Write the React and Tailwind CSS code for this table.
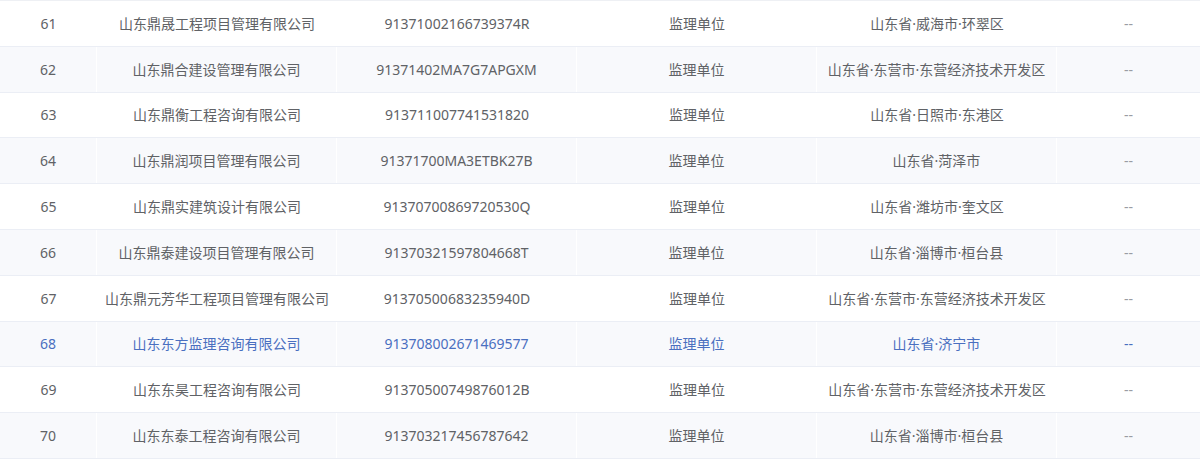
const rows = [
  ["61", "山东鼎晟工程项目管理有限公司", "91371002166739374R", "监理单位", "山东省·威海市·环翠区"],
  ["62", "山东鼎合建设管理有限公司", "91371402MA7G7APGXM", "监理单位", "山东省·东营市·东营经济技术开发区"],
  ["63", "山东鼎衡工程咨询有限公司", "913711007741531820", "监理单位", "山东省·日照市·东港区"],
  ["64", "山东鼎润项目管理有限公司", "91371700MA3ETBK27B", "监理单位", "山东省·菏泽市"],
  ["65", "山东鼎实建筑设计有限公司", "91370700869720530Q", "监理单位", "山东省·潍坊市·奎文区"],
  ["66", "山东鼎泰建设项目管理有限公司", "91370321597804668T", "监理单位", "山东省·淄博市·桓台县"],
  ["67", "山东鼎元芳华工程项目管理有限公司", "91370500683235940D", "监理单位", "山东省·东营市·东营经济技术开发区"],
  ["68", "山东东方监理咨询有限公司", "913708002671469577", "监理单位", "山东省·济宁市"],
  ["69", "山东东昊工程咨询有限公司", "91370500749876012B", "监理单位", "山东省·东营市·东营经济技术开发区"],
  ["70", "山东东泰工程咨询有限公司", "913703217456787642", "监理单位", "山东省·淄博市·桓台县"],
];

export default function App() {
  return (
    <div
      className="w-[1200px] h-[461px] bg-white overflow-hidden text-[14px]"
      style={{ fontFamily: '"Noto Sans", "Noto Sans CJK SC", sans-serif' }}
    >
      <div className="border-t border-[#eef0f4]">
        {rows.map((r, i) => {
          const striped = i % 2 === 1;
          const active = r[0] === "68";
          return (
            <div
              key={r[0]}
              className={`grid grid-cols-[97px_240px_240px_240px_240px_143px] h-[45.8px] border-b border-[#ebeef5] ${
                striped ? "bg-[#f8f9fc]" : "bg-white"
              } ${active ? "text-[#4a6fc0]" : "text-[#606266]"}`}
            >
              {[r[0], r[1], r[2], r[3], r[4], "--"].map((c, j) => (
                <div
                  key={j}
                  className={`flex items-center justify-center whitespace-nowrap ${
                    j < 5 && striped ? "border-r border-white" : ""
                  } ${j === 5 ? (active ? "text-[#4a6fc0]" : "text-[#9a9ca3]") : ""}`}
                >
                  {c}
                </div>
              ))}
            </div>
          );
        })}
      </div>
    </div>
  );
}
